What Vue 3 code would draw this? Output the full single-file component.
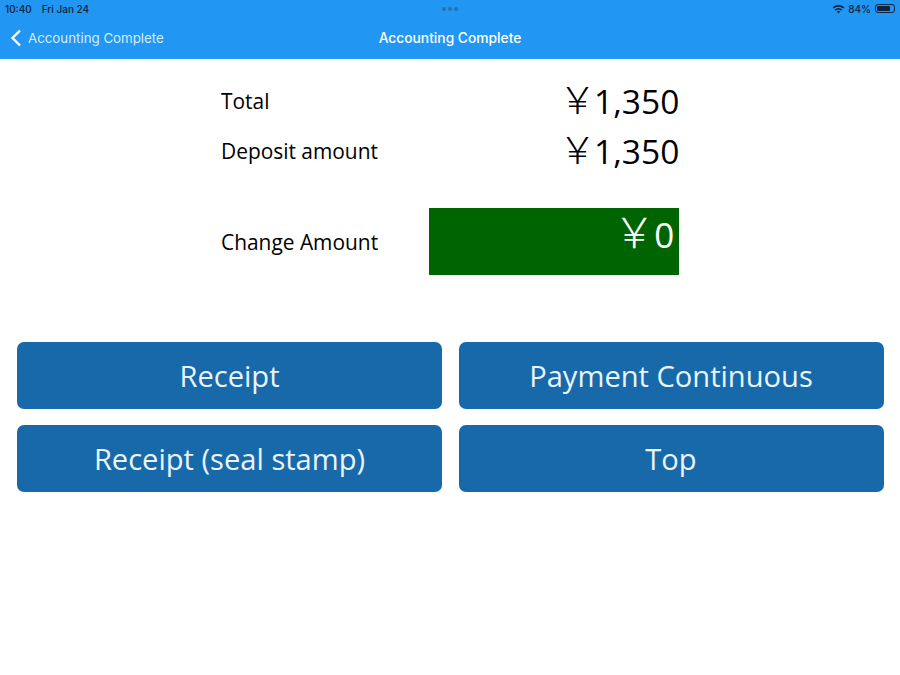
<script setup>
const yen = '\uFFE5'
const rows = [
  { label: 'Total', value: '1,350' },
  { label: 'Deposit amount', value: '1,350' }
]
const buttons = ['Receipt', 'Payment Continuous', 'Receipt (seal stamp)', 'Top']
</script>

<template>
  <div class="page">
    <header class="header">
      <div class="status">
        <div class="status-left">
          <span>10:40</span>
          <span>Fri Jan 24</span>
        </div>
        <div class="dots"><i></i><i></i><i></i></div>
        <div class="status-right">
          <svg class="wifi" width="13" height="10" viewBox="0 0 13 10">
            <path d="M0.6 3.4 A8.4 8.4 0 0 1 12.4 3.4 L11.2 4.6 A6.7 6.7 0 0 0 1.8 4.6 Z" />
            <path d="M2.7 5.5 A5.4 5.4 0 0 1 10.3 5.5 L9.1 6.7 A3.7 3.7 0 0 0 3.9 6.7 Z" />
            <path d="M4.8 7.6 A2.4 2.4 0 0 1 8.2 7.6 L6.5 9.4 Z" />
          </svg>
          <span>84%</span>
          <span class="battery"><b></b></span>
        </div>
      </div>
      <div class="nav">
        <div class="back">
          <svg width="12" height="18" viewBox="0 0 12 18">
            <path d="M10 1.5 L2.5 9 L10 16.5" fill="none" stroke="#fff" stroke-width="2.4" />
          </svg>
          <span>Accounting Complete</span>
        </div>
        <div class="title">Accounting Complete</div>
      </div>
    </header>

    <section class="summary">
      <div v-for="row in rows" :key="row.label" class="row">
        <span class="label">{{ row.label }}</span>
        <span class="amount"><span class="yen">{{ yen }}</span>{{ row.value }}</span>
      </div>
      <div class="row change">
        <span class="label">Change Amount</span>
        <div class="change-box"><span class="yen">{{ yen }}</span>0</div>
      </div>
    </section>

    <section class="actions">
      <button v-for="b in buttons" :key="b" class="action">{{ b }}</button>
    </section>
  </div>
</template>

<style>
html, body {
  margin: 0;
  background: #fff;
}
</style>

<style scoped>
.page {
  width: 900px;
  height: 675px;
  overflow: hidden;
  font-family: "Open Sans", "Noto Sans CJK JP", sans-serif;
  color: #000;
}

.header {
  height: 59px;
  background: #2196f3;
  box-sizing: border-box;
}

.status {
  height: 17px;
  padding: 0 5px;
  display: flex;
  justify-content: space-between;
  align-items: center;
  position: relative;
  font-family: Inter, "Liberation Sans", sans-serif;
  font-size: 10px;
  font-weight: 500;
  color: #0a2540;
}

.status-left {
  display: flex;
  gap: 10px;
}

.status-right {
  display: flex;
  align-items: center;
  gap: 3px;
}

.wifi {
  fill: #0a2540;
}

.dots {
  position: absolute;
  left: 442px;
  top: 7px;
  display: flex;
  gap: 2px;
}

.dots i {
  width: 4px;
  height: 4px;
  border-radius: 50%;
  background: #2a6fb0;
}

.battery {
  width: 20px;
  height: 9px;
  border: 1px solid #0a2540;
  border-radius: 3px;
  box-sizing: border-box;
  padding: 1px;
  display: flex;
  margin-left: 1px;
}

.battery b {
  width: 84%;
  background: #0a2540;
  border-radius: 1px;
}

.nav {
  height: 42px;
  position: relative;
  display: flex;
  align-items: center;
  justify-content: center;
  font-family: Inter, "Liberation Sans", sans-serif;
  color: #fff;
}

.back {
  position: absolute;
  left: 10px;
  top: 12px;
  display: flex;
  align-items: center;
  gap: 6px;
  font-size: 13.3px;
  color: #d6ecfd;
}

.title {
  font-size: 13.8px;
  font-weight: 500;
}

.summary {
  width: 458.3px;
  margin: 17px 0 0 221px;
}

.row {
  display: flex;
  justify-content: space-between;
  align-items: center;
  height: 50px;
}

.label {
  font-size: 20.9px;
}

.amount {
  font-size: 33.5px;
  line-height: 46px;
}

.yen {
  font-size: 37px;
  line-height: 0;
  font-weight: 300;
  margin-right: -2px;
}

.change {
  height: 67px;
  margin-top: 32px;
}

.change-box {
  width: 250px;
  height: 67px;
  box-sizing: border-box;
  background: #006400;
  color: #fff;
  font-size: 35px;
  line-height: 54px;
  text-align: right;
  padding-right: 5px;
}

.change-box .yen {
  font-size: 42px;
  margin-right: -1px;
}

.actions {
  margin: 67px 16px 0 17px;
  display: grid;
  grid-template-columns: 425px 425px;
  column-gap: 16.5px;
  row-gap: 16.5px;
}

.action {
  height: 66.5px;
  border: 0;
  border-radius: 7px;
  background: #1769aa;
  color: #e9f4fc;
  font-family: inherit;
  font-size: 29.1px;
  padding: 2px 0 0;
}
</style>
